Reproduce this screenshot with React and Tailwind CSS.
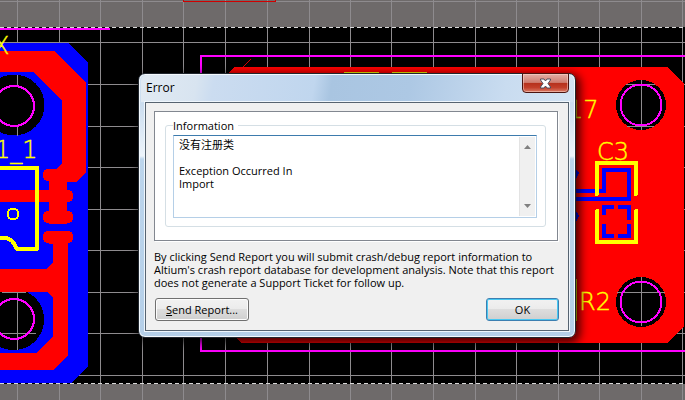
import React from "react";

const columns = [17, 59, 100, 142, 183, 225, 267, 309, 350, 391, 433, 475, 516, 558, 599, 641, 682];
const rows = [1, 42, 84, 126, 167, 209, 250, 292, 333, 375];

function Grid() {
  return (
    <g fill="#8e8b8e">
      {columns.map((x) => (
        <rect key={x} x={x} y="0" width="1" height="400" />
      ))}
      {rows.map((y) => (
        <rect key={y} x="0" y={y} width="685" height="1" />
      ))}
    </g>
  );
}

function LeftBoard() {
  return (
    <g>
      <path fill="#00f" d="M0 43H68L88 63V367L71 383H0Z" />
      <path fill="#f00" d="M0 51H54L86 83V172L76 182H62V101L33 72H0Z" />
      <path fill="#f00" d="M62 163V182H50V169H56Z" />
      <path fill="#f00" d="M49 176H67V222H49ZM0 190H67V202H0Z" />
      <path fill="#f00" d="M53 237H68V355L53 370H0V353H36L53 336V298L47 292H0V269H46L53 262Z" />
      <path stroke="#f00" strokeWidth="13" strokeLinecap="round" d="M49 175H66M49 196H67M49 217H67M49 237H67" />
      <circle cx="14" cy="105" r="30.500" fill="#000" />
      <path fill="#000" d="M0 292H27A30.500 30.500 0 1 1 0 347Z" />
      <path fill="#8e8b8e" d="M17 75H18V85H17ZM17 126H18V136H17ZM17 292H18V350H17ZM0 333H36V334H0ZM2 292H26V293H2Z" />
      <g fill="none" stroke="#f0f" strokeWidth="2">
        <circle cx="14" cy="106" r="20" />
        <circle cx="14" cy="319" r="20" />
      </g>
      <g fill="none" stroke="#ff0">
        <path strokeWidth="4" strokeLinejoin="round" d="M0 168H37V249H17C14 242 10 238 5 238H0" />
        <circle cx="13" cy="214" r="5.500" strokeWidth="2" />
      </g>
    </g>
  );
}

function MountingHole({ cy }) {
  return (
    <g>
      <circle cx="641" cy={cy} r="25" fill="#000" />
      <path stroke="#8e8b8e" d={cy < 200 ? "M641.500 80V130M626 84.500H655M627 126.500H654" : "M641.500 277V326M617 292.500H665"} />
      <circle cx="641" cy={cy} r="20.500" fill="none" stroke="#f0f" strokeWidth="2" />
    </g>
  );
}

function RightBoard() {
  return (
    <g>
      <path fill="none" stroke="#f0f" strokeWidth="2" d="M685 56H201V351H685" />
      <path fill="#f00" d="M234 67H667L684 84V326L667 343H241L228 330V73Z" />
      <path stroke="#d40000" d="M243 67L251 59" />
      <path stroke="#ff0" d="M344 72.500H379M392 72.500H427" />
      <g fill="none" stroke="#00f" strokeWidth="4">
        <path d="M570 191H604V170H629V199H570" />
        <path d="M604 215V207H614M618 207H629V220M629 224V236H618M614 236H604V224" />
        <path d="M573 169L577 173L573 180M573 211L577 216L573 224V241" />
      </g>
      <g fill="none" stroke="#ff0" strokeWidth="4" strokeLinecap="round">
        <path d="M597 194V163H636V194M597 211V242H636V211" />
        <path strokeWidth="2" d="M576 280V320" />
      </g>
      <MountingHole cy={105} />
      <MountingHole cy={302} />
    </g>
  );
}

function BoardCanvas() {
  return (
    <svg className="absolute inset-0 h-full w-full" viewBox="0 0 685 400" preserveAspectRatio="xMidYMid slice" shapeRendering="crispEdges" aria-label="PCB layout">
      <rect width="685" height="400" fill="#000" />
      <path fill="#6e6a6a" d="M0 0H685V27H0ZM0 384H685V400H0Z" />
      <Grid />
      <path fill="none" stroke="#d00000" d="M183.500 0V1.500H275.500V0" />
      <path stroke="#d8d8d8" strokeDasharray="4 3" d="M0 27.500H685M0 383.500H685" />
      <path fill="#f0f" d="M0 28H110V30H0Z" />
      <LeftBoard />
      <RightBoard />
      <g fill="#ff0" stroke="#ff0" strokeWidth="0.4" fontSize="24" className="font-['DejaVu_Sans_Light','DejaVu_Sans',sans-serif] font-extralight">
        <text x="-7" y="54">X</text>
        <text x="-5" y="158">1_1</text>
        <text x="568" y="118">17</text>
        <text x="597" y="160">C3</text>
        <text x="579" y="310">R2</text>
      </g>
    </svg>
  );
}

function ScrollBar() {
  return (
    <div className="flex w-4 flex-col justify-between border-l border-[#e3e3e3] bg-[#f0f0f0] py-1">
      <button type="button" aria-label="Scroll up" className="flex h-3 items-center justify-center">
        <svg width="7" height="4" viewBox="0 0 7 4"><path fill="#808080" d="M0 4L3.500 0L7 4Z" /></svg>
      </button>
      <button type="button" aria-label="Scroll down" className="flex h-3 items-center justify-center">
        <svg width="7" height="4" viewBox="0 0 7 4"><path fill="#808080" d="M0 0L3.500 4L7 0Z" /></svg>
      </button>
    </div>
  );
}

function ErrorDialog() {
  return (
    <section
      role="dialog"
      aria-labelledby="error-title"
      className="absolute top-[73px] left-[138px] w-[438px] rounded-[7px] border border-[#20262e] bg-[linear-gradient(180deg,#d3e3f3_0px,#cbddef_30px,#edf4fb_82px,#bcd5ec_85px,#b5cfe8_100%)] px-[6px] pb-[6px] shadow-[inset_0_0_0_1px_#f4f9fd,2px_3px_10px_2px_rgba(0,0,0,0.75)]"
    >
      <header className="-mx-1 mt-px flex h-[27px] items-start justify-between rounded-t-md bg-[linear-gradient(100deg,#e1eaf3_0%,#d8e4f0_13%,#cbdcf0_17%,#c0d6ee_40%,#a9c5e1_44%,#adc8e4_62%,#c9dcf0_84%,#d3e3f3_100%)] pl-[5px] pr-1">
        <h1 id="error-title" className="pt-[5px] text-[12px] leading-4">Error</h1>
        <button
          type="button"
          aria-label="Close"
          className="-mt-[2px] flex h-5 w-[47px] items-center justify-center rounded-b-[4px] border border-[#4a1410] bg-[linear-gradient(180deg,#e4aea5_0%,#cf7d70_47%,#b5301b_50%,#c23f2a_75%,#d97b66_100%)] shadow-[inset_0_0_0_1px_rgba(255,220,210,0.5)]"
        >
          <svg width="13" height="11" viewBox="0 0 13 11">
            <path fill="#fff" stroke="#4c4d5c" d="M1.500 1H5L6.500 3L8 1H11.500V2L9 5.500L11.500 9V10H8L6.500 8L5 10H1.500V9L4 5.500L1.500 2Z" />
          </svg>
        </button>
      </header>
      <div className="border border-[#566370] bg-[#f0f0f0] px-2 pt-2 pb-[9px] shadow-[0_0_0_1px_#eff6fc]">
        <div className="mr-[2px] border border-[#828790] bg-white pt-[6px] pr-[11px] pb-[13px] pl-[10px] shadow-[1px_1px_0_#fff]">
          <fieldset className="rounded-[3px] border border-[#d5dfe5] pt-[2px] pr-2 pb-2 pl-[7px]">
            <legend className="pr-1 text-[11px] leading-[15px]">
              <label htmlFor="details">Information</label>
            </legend>
            <div className="flex border border-[#b5cfe7] border-t-[#3d7bad] bg-white p-px">
              <textarea
                id="details"
                readOnly
                rows={6}
                className="h-[79px] min-w-0 flex-1 resize-none overflow-hidden pt-px pl-[4px] text-[11px] leading-[13px] outline-none"
                defaultValue={"没有注册类\n\nException Occurred In\nImport"}
              />
              <ScrollBar />
            </div>
          </fieldset>
        </div>
        <p className="pt-[9px] text-[11px] leading-[13px]">
          By clicking Send Report you will submit crash/debug report information to<br />
          Altium's crash report database for development analysis. Note that this report<br />
          does not generate a Support Ticket for follow up.
        </p>
        <div className="mt-[9px] flex justify-between px-px">
          <button type="button" className="h-[23px] w-[94px] rounded-[3px] border border-[#707070] bg-[linear-gradient(180deg,#f2f2f2_0%,#ebebeb_50%,#dddddd_50%,#cfcfcf_100%)] pt-px text-[11px] shadow-[inset_0_0_0_1px_#fcfcfc]">
            <span className="underline">S</span>end Report...
          </button>
          <button type="button" className="h-[23px] w-[73px] rounded-[3px] border border-[#3c7fb1] bg-[linear-gradient(180deg,#f2f2f2_0%,#ebebeb_50%,#dddddd_50%,#cfcfcf_100%)] pt-px text-[11px] shadow-[inset_0_0_0_1px_#48c8f2]">
            OK
          </button>
        </div>
      </div>
    </section>
  );
}

export default function App() {
  return (
    <main className="relative min-h-screen overflow-hidden bg-black font-['Open_Sans','Noto_Sans_CJK_SC',sans-serif] text-black">
      <BoardCanvas />
      <ErrorDialog />
    </main>
  );
}
